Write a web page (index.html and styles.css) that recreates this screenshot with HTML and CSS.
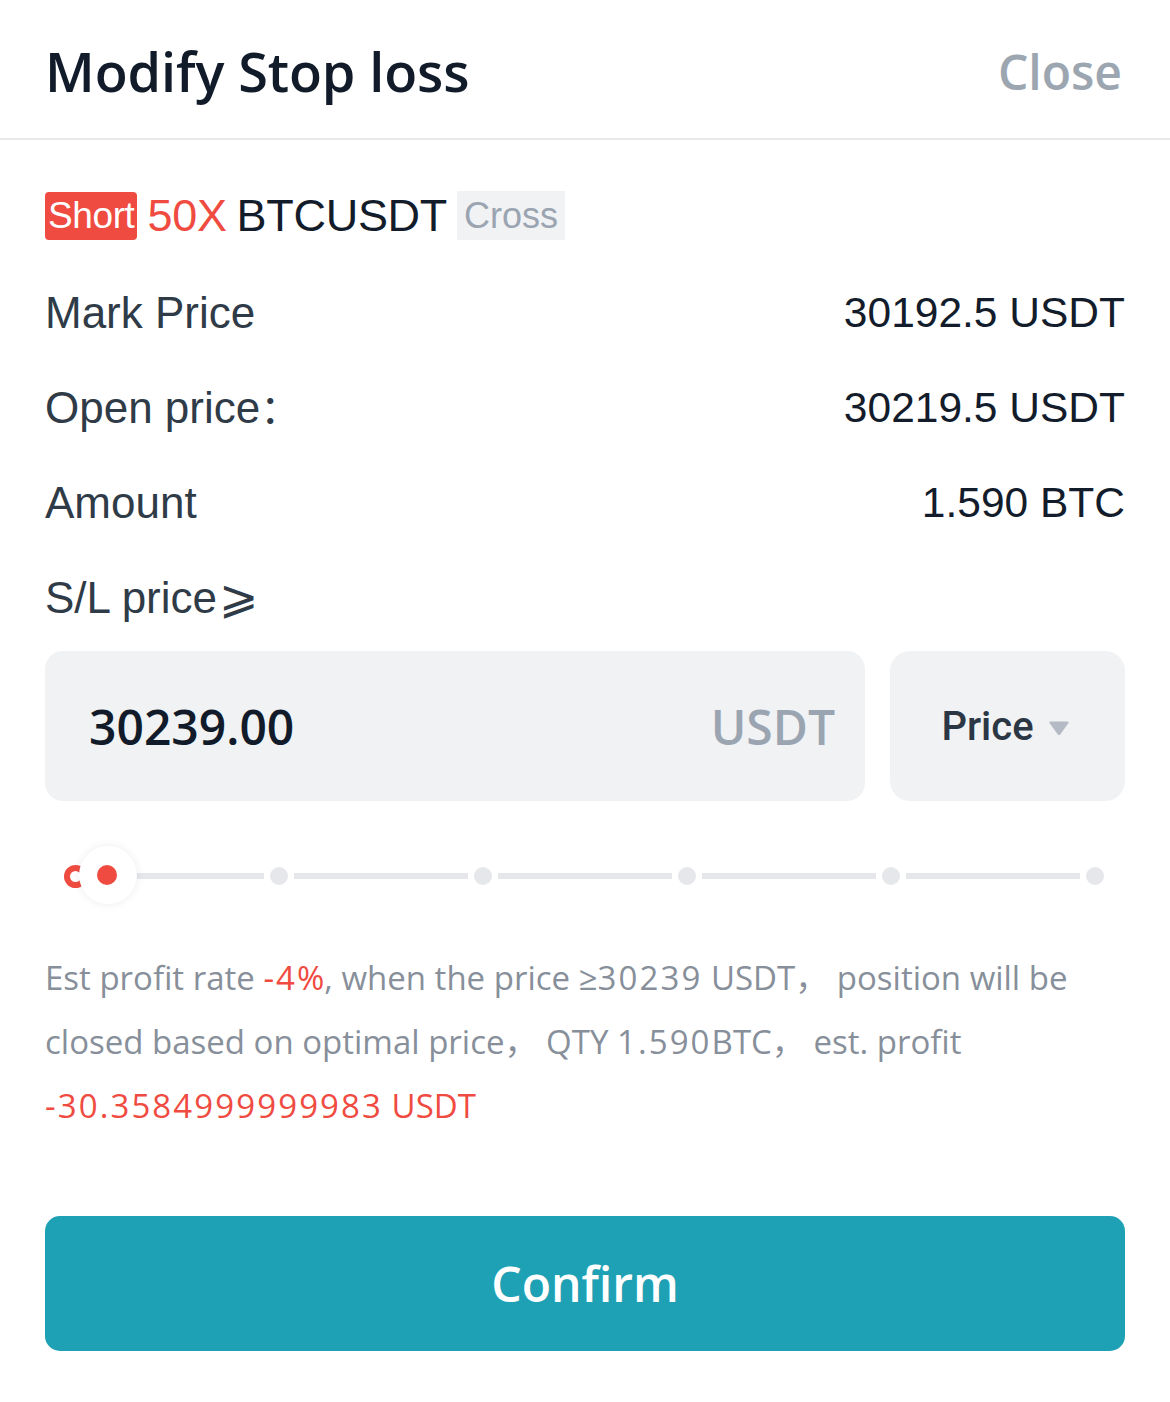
FILE: index.html
```html
<!DOCTYPE html>
<html lang="en">
<head>
<meta charset="utf-8">
<title>Modify Stop loss</title>
<link rel="stylesheet" href="styles.css">
</head>
<body>
<div class="sheet">
  <header class="header">
    <h1 class="title">Modify Stop loss</h1>
    <span class="close">Close</span>
  </header>
  <main class="content">
    <div class="symbol-row">
      <span class="side">Short</span>
      <span class="lev">50X</span>
      <span class="pair">BTCUSDT</span>
      <span class="mode">Cross</span>
    </div>
    <div class="row"><span class="label">Mark Price</span><span class="value">30192.5 USDT</span></div>
    <div class="row"><span class="label">Open price<span class="cjk">：</span></span><span class="value">30219.5 USDT</span></div>
    <div class="row"><span class="label">Amount</span><span class="value">1.590 BTC</span></div>
    <div class="row"><span class="label">S/L price<span class="cjk cjk-ge">⩾</span></span></div>
    <div class="inputs">
      <div class="field">
        <span class="field-value">30239.00</span>
        <span class="field-unit">USDT</span>
      </div>
      <div class="select">
        <span class="select-text">Price</span>
        <svg class="caret" width="22" height="16" viewBox="0 0 22 16"><path d="M2.5 1.5 H19.5 Q21.5 1.5 20.3 3.3 L12.4 14.2 Q11 16 9.6 14.2 L1.7 3.3 Q0.5 1.5 2.5 1.5 Z" fill="#b4bbc4"/></svg>
      </div>
    </div>
    <div class="slider">
      <span class="dot dot-active"></span>
      <span class="seg"></span>
      <span class="dot"></span>
      <span class="seg"></span>
      <span class="dot"></span>
      <span class="seg"></span>
      <span class="dot"></span>
      <span class="seg"></span>
      <span class="dot"></span>
      <span class="seg"></span>
      <span class="dot"></span>
      <span class="thumb"><span class="thumb-dot"></span></span>
    </div>
    <p class="desc">Est profit rate <span class="red num">-4</span><span class="red">%</span>, when the price ≥<span class="num">30239</span> USDT， position will be closed based on optimal price， QTY <span class="num">1.590</span>BTC， est. profit <span class="red num">-30.3584999999983</span><span class="red"> USDT</span></p>
    <button class="confirm">Confirm</button>
  </main>
</div>
</body>
</html>
```

FILE: styles.css
```css
* { box-sizing: border-box; }
html, body { margin: 0; padding: 0; background: #ffffff; }
body { width: 1170px; height: 1402px; overflow: hidden; font-family: "Liberation Sans", Arial, "Noto Sans CJK SC", sans-serif; }

.header {
  height: 140px;
  display: flex;
  align-items: center;
  justify-content: space-between;
  padding: 4px 48px 0 45px;
  border-bottom: 2px solid #e8e8e8;
}
.title {
  margin: 0;
  font-family: "Open Sans", "Noto Sans CJK SC", sans-serif;
  font-weight: 600;
  font-size: 54px;
  color: #111b2a;
  letter-spacing: -0.1px;
}
.close {
  font-family: "Open Sans", sans-serif;
  font-weight: 600;
  font-size: 48px;
  color: #9ca6b1;
}

.content { padding: 0 45px; display: flex; flex-direction: column; }

.symbol-row {
  margin-top: 51px;
  height: 49px;
  display: flex;
  align-items: center;
}
.side {
  height: 48px;
  display: flex;
  align-items: center;
  padding: 0 3px;
  background: #f04b41;
  color: #fff;
  border-radius: 4px;
  font-size: 37px;
  letter-spacing: -0.4px;
}
.lev { margin-left: 10px; color: #f04b41; font-size: 45px; letter-spacing: -0.3px; }
.pair { margin-left: 10px; color: #131c2b; font-size: 45px; letter-spacing: -0.3px; }
.mode {
  margin-left: 10px;
  height: 49px;
  display: flex;
  align-items: center;
  padding: 0 7px;
  background: #f1f2f4;
  color: #9aa5b1;
  font-size: 36px;
}

.row {
  height: 95px;
  display: flex;
  align-items: center;
  justify-content: space-between;
}
.symbol-row + .row { margin-top: 25px; }
.label { color: #2f3b47; font-size: 44px; }
.cjk { line-height: 0; font-family: "DejaVu Sans", "Noto Sans CJK SC", sans-serif; font-size: 40px; }
.cjk-ge { font-size: 47px; margin-left: 2px; }
.value { color: #131c2b; font-size: 42.5px; }

.inputs {
  margin-top: 6px;
  height: 150px;
  display: flex;
  gap: 25px;
}
.field {
  flex: 1;
  background: #f1f2f4;
  border-radius: 18px;
  display: flex;
  align-items: center;
  justify-content: space-between;
  padding: 0 30px 0 44px;
  font-family: "Open Sans", sans-serif;
  font-weight: 600;
}
.field-value { font-size: 48px; color: #111b2a; }
.field-unit { font-size: 48px; color: #9aa5b1; }
.select {
  width: 235px;
  background: #f1f2f4;
  border-radius: 20px;
  display: flex;
  align-items: center;
  justify-content: center;
  gap: 14px;
}
.select-text { font-family: Roboto, sans-serif; font-weight: 500; font-size: 40px; color: #2b3744; margin-left: -4px; }
.caret { display: block; margin-top: 3px; }

.slider {
  position: relative;
  margin: 45px 21px 0 21px;
  height: 60px;
  display: flex;
  align-items: center;
}
.dot {
  width: 18px;
  height: 18px;
  border-radius: 50%;
  background: #e6e7ea;
  flex: none;
}
.dot-active {
  width: 23px;
  height: 23px;
  margin: 0 -2.5px;
  background: #fff;
  border: 6px solid #f04b41;
}
.seg {
  flex: 1;
  height: 6px;
  margin: 0 6px;
  background: #e6e7ea;
}
.thumb {
  position: absolute;
  left: 13px;
  top: 0;
  width: 58px;
  height: 58px;
  border-radius: 50%;
  background: #fff;
  box-shadow: 0 0 10px rgba(0, 0, 0, 0.08);
  display: flex;
  align-items: center;
  justify-content: center;
}
.thumb-dot {
  width: 20px;
  height: 20px;
  border-radius: 50%;
  background: #f04b41;
  margin-left: -2px;
}

.desc {
  margin: 40px 0 0 0;
  font-family: "Open Sans", "Noto Sans CJK SC", sans-serif;
  font-size: 33px;
  line-height: 64px;
  color: #878f9a;
}
.num { letter-spacing: 2.1px; }
.red { color: #f04b41; }

.confirm {
  margin-top: 78px;
  height: 135px;
  width: 100%;
  border: none;
  border-radius: 15px;
  background: #1fa1b5;
  color: #ffffff;
  font-family: "Open Sans", sans-serif;
  font-weight: 600;
  font-size: 48px;
}
```
